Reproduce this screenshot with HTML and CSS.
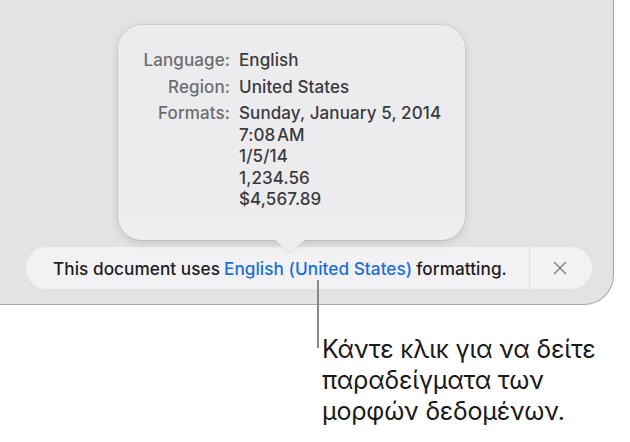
FILE: index.html
```html
<!DOCTYPE html>
<html lang="en">
<head>
<meta charset="utf-8">
<link rel="stylesheet" href="styles.css">
</head>
<body>
<div class="window">
  <div class="popover">
    <div class="info">
      <div class="label">Language:</div>
      <div class="value">English</div>
      <div class="label">Region:</div>
      <div class="value">United States</div>
      <div class="label">Formats:</div>
      <div class="value">Sunday, January 5, 2014<br>7:08&#8202;AM<br>1/5/14<br>1,234.56<br>$4,567.89</div>
    </div>
    <svg class="arrow" width="32" height="14" viewBox="0 0 32 14"><path d="M0 0 L13.2 12 Q16 14.4 18.8 12 L32 0 Z" fill="#ededef"/></svg>
  </div>
  <div class="banner">
    <div class="message">This document uses <span class="link">English (United States)</span> formatting.</div>
    <div class="close">
      <svg width="14" height="14" viewBox="0 0 14 14"><path d="M1.5 1.5 L12.5 12.5 M12.5 1.5 L1.5 12.5" stroke="#7b7b7e" stroke-width="1.4" stroke-linecap="round" fill="none"/></svg>
    </div>
  </div>
</div>
<div class="callout">
  <p class="callout-text">Κάντε κλικ για να δείτε παραδείγματα των μορφών δεδομένων.</p>
</div>
</body>
</html>
```
FILE: styles.css
```css
* { box-sizing: border-box; }
html, body { margin: 0; padding: 0; background: #ffffff; }
body {
  width: 630px;
  height: 442px;
  overflow: hidden;
  font-family: Inter, "Noto Sans", "Liberation Sans", sans-serif;
}
.window {
  width: 614px;
  height: 305px;
  background: #e3e3e6;
  border-right: 1.5px solid #a9a9ac;
  border-bottom: 1.5px solid #a9a9ac;
  border-bottom-right-radius: 30px;
  padding-top: 25px;
}
.popover {
  position: relative;
  margin-left: 118px;
  width: 347px;
  height: 215px;
  border-radius: 24px;
  background: linear-gradient(#ececee 0%, #ececee 85%, #efeff1 100%);
  box-shadow: 0 0 0 0.5px rgba(0,0,0,0.14), 0 3px 10px rgba(0,0,0,0.13);
  padding: 25px 0 0 20px;
}
.arrow {
  position: absolute;
  left: 156px;
  bottom: -13px;
  filter: drop-shadow(0 1px 0.5px rgba(0,0,0,0.08));
}
.info {
  display: grid;
  grid-template-columns: 92px auto;
  column-gap: 9px;
  row-gap: 5px;
  font-size: 17px;
  line-height: 21.5px;
  font-weight: 500;
  letter-spacing: 0.1px;
}
.label { text-align: right; color: #6d6d70; }
.value { color: #3a3a3c; }
.banner {
  display: flex;
  margin: 7px 0 0 26px;
  width: 566px;
  height: 42px;
  border-radius: 21px;
  background: #f2f2f4;
  overflow: hidden;
}
.message {
  flex: 1;
  display: flex;
  align-items: center;
  padding-left: 27px;
  font-size: 17.2px;
  font-weight: 500;
  color: #1d1d1f;
  letter-spacing: 0.05px;
  white-space: nowrap;
}
.link { color: #1b6fd8; margin: 0 4px; }
.close {
  width: 63px;
  border-left: 1px solid #dedee1;
  display: flex;
  align-items: center;
  justify-content: center;
  padding-right: 2px;
}
.callout {
  position: relative;
  padding: 29px 0 0 322px;
}
.callout::before {
  content: "";
  position: absolute;
  left: 317px;
  top: -25px;
  width: 2px;
  height: 68px;
  background: #8a8a8d;
}
.callout-text {
  margin: 0;
  width: 308px;
  font-size: 25px;
  line-height: 31px;
  color: #1a1a1a;
  letter-spacing: -0.2px;
}
```
